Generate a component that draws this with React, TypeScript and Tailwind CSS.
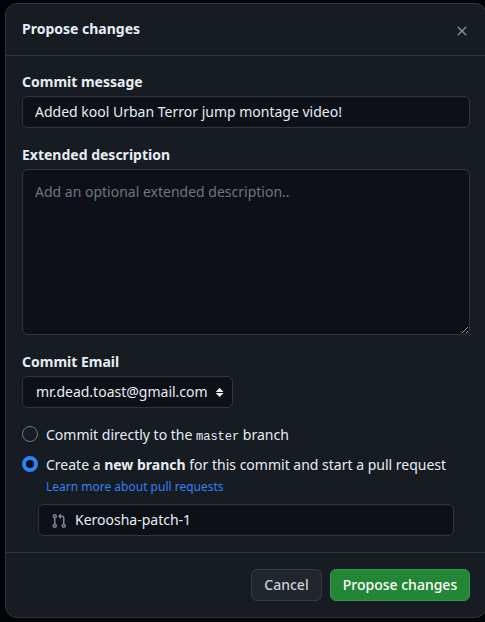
import type { ReactNode } from "react";

function Label({ children }: { children: ReactNode }) {
  return <div className="h-[21px] font-bold leading-[21px]">{children}</div>;
}

function CloseIcon() {
  return (
    <svg width="16" height="16" viewBox="0 0 16 16" fill="#848d97">
      <path d="M3.72 3.72a.75.75 0 0 1 1.06 0L8 6.94l3.22-3.22a.75.75 0 1 1 1.06 1.06L9.06 8l3.22 3.22a.75.75 0 1 1-1.06 1.06L8 9.06l-3.22 3.22a.75.75 0 0 1-1.06-1.06L6.94 8 3.72 4.78a.75.75 0 0 1 0-1.06Z" />
    </svg>
  );
}

function PullRequestIcon() {
  return (
    <svg className="mt-[2px]" width="16" height="16" viewBox="0 0 16 16" fill="#7d8590">
      <path d="M1.5 3.25a2.25 2.25 0 1 1 3 2.122v5.256a2.251 2.251 0 1 1-1.5 0V5.372A2.25 2.25 0 0 1 1.5 3.25Zm5.677-.177L9.573.677A.25.25 0 0 1 10 .854V2.5h1A2.5 2.5 0 0 1 13.5 5v5.628a2.251 2.251 0 1 1-1.5 0V5a1 1 0 0 0-1-1h-1v1.646a.25.25 0 0 1-.427.177L7.177 3.427a.25.25 0 0 1 0-.354ZM3.75 2.5a.75.75 0 1 0 0 1.5.75.75 0 0 0 0-1.5Zm0 9.5a.75.75 0 1 0 0 1.5.75.75 0 0 0 0-1.5Zm8.25.75a.75.75 0 1 0 1.5 0 .75.75 0 0 0-1.5 0Z" />
    </svg>
  );
}

function SortIcon() {
  return (
    <svg width="16" height="16" viewBox="0 0 16 16" fill="#e6edf3">
      <path d="m4.074 9.427 3.396 3.396a.25.25 0 0 0 .354 0l3.396-3.396A.25.25 0 0 0 11.043 9H4.251a.25.25 0 0 0-.177.427ZM4.074 7.47 7.47 4.073a.25.25 0 0 1 .354 0L11.22 7.47a.25.25 0 0 1-.177.426H4.251a.25.25 0 0 1-.177-.426Z" />
    </svg>
  );
}

export default function App() {
  return (
    <div className="h-[622px] w-[485px] overflow-hidden bg-[#020408] pl-[5px] pt-[3px] font-['Noto_Sans',sans-serif] text-[14px] leading-[21px] text-[#e6edf3]">
      <div className="flex h-[615px] w-[482px] flex-col rounded-xl border border-[#30363d] bg-[#171b22]">
        <header className="flex h-[52px] items-center justify-between border-b border-[#30363d] pl-4 pr-4">
          <h1 className="pb-[2px] font-bold">Propose changes</h1>
          <button className="mt-[2px]" aria-label="Close">
            <CloseIcon />
          </button>
        </header>

        <main className="h-[497px] border-b border-[#30363d] px-4 pt-[15px]">
          <Label>Commit message</Label>
          <input
            className="mt-1 block h-8 w-[448px] rounded-md border border-[#30363d] bg-[#0d1017] px-3 pb-[2px] leading-5"
            defaultValue="Added kool Urban Terror jump montage video!"
          />
          <div className="mt-4">
            <Label>Extended description</Label>
          </div>
          <textarea
            className="mt-1 block h-[166px] w-[448px] resize rounded-md border border-[#30363d] bg-[#0d1017] p-3 leading-5 [color-scheme:dark] placeholder:text-[#6e7681]"
            placeholder="Add an optional extended description.."
          />
          <div className="mt-4">
            <Label>Commit Email</Label>
          </div>
          <button className="mt-1 flex h-8 w-[211px] items-center justify-between rounded-md border border-[#30363d] bg-[#0d1017] pl-[13px] pr-1">
            <span className="pb-[2px]">mr.dead.toast@gmail.com</span>
            <SortIcon />
          </button>

          <label className="mt-4 flex h-[21px] gap-2">
            <span className="mt-[2px] size-4 rounded-full border border-[#6e7681]" />
            <span>
              Commit directly to the{" "}
              <code className="font-['Liberation_Mono',monospace] text-[12px]">master</code> branch
            </span>
          </label>
          <label className="mt-[9px] flex h-[21px] gap-2">
            <span className="mt-[2px] size-4 rounded-full border-4 border-[#2f81f7] bg-[#0d1017]" />
            <span>
              Create a <strong className="font-bold">new branch</strong> for this commit and start a pull request
            </span>
          </label>
          <a className="ml-6 mt-px block h-[21px] text-xs leading-[21px] text-[#2f81f7]">
            Learn more about pull requests
          </a>
          <div className="ml-4 mt-[7px] flex h-8 w-[416px] items-center rounded-md border border-[#30363d] bg-[#0d1017] pl-3">
            <PullRequestIcon />
            <input className="ml-2 w-80 leading-5" defaultValue="Keroosha-patch-1" />
          </div>
        </main>

        <footer className="flex justify-end gap-2 p-4">
          <button className="h-8 w-[71px] rounded-md border border-[#363b42] bg-[#21262d] pb-[2px] font-medium text-[#c9d1d9]">
            Cancel
          </button>
          <button className="h-8 w-[140px] rounded-md border border-[#399649] bg-[#238636] pb-[2px] font-medium text-white">
            Propose changes
          </button>
        </footer>
      </div>
    </div>
  );
}
